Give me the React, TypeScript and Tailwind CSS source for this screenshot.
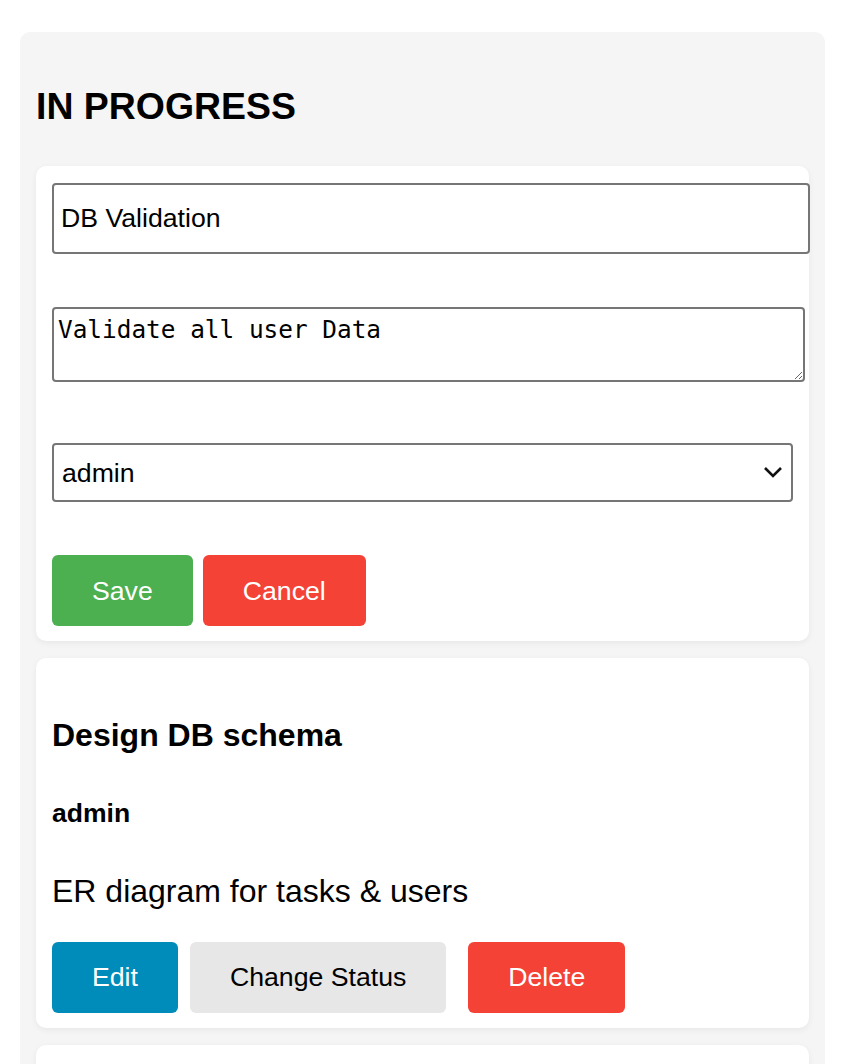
import { useState } from 'react';

const sans = '[font-family:"Liberation_Sans",Arial,sans-serif]';

export default function App() {
    const [title, setTitle] = useState('DB Validation');
    const [desc, setDesc] = useState('Validate all user Data');
    const [assignee, setAssignee] = useState('admin');

    return (
        <div className={`min-h-screen bg-white pt-[32px] text-black ${sans}`}>
            <div className="ml-[20px] w-[805px] rounded-t-[10px] bg-[#f5f5f5] px-[16px] pt-[16px] pb-[40px]">
                <h3 className="mt-[37px] mb-[38px] text-[37.44px] font-bold leading-[43px]">IN PROGRESS</h3>

                {/* task being edited */}
                <div className="mb-[17px] rounded-[10px] bg-white px-[16px] pt-[17px] pb-[15px] shadow-[0_2px_6px_rgba(0,0,0,0.06)]">
                    <input
                        type="text"
                        value={title}
                        onChange={(e) => setTitle(e.target.value)}
                        className={`block h-[71px] w-[758px] rounded-[4px] border-2 border-[#767676] bg-white px-[7px] text-[26.67px] text-black outline-none ${sans}`}
                    />
                    <textarea
                        value={desc}
                        onChange={(e) => setDesc(e.target.value)}
                        className='mt-[53px] block h-[75px] w-[753px] rounded-[4px] border-2 border-[#767676] bg-white px-[4px] pt-[6px] text-[24.4px] leading-[30px] text-black outline-none [font-family:"DejaVu_Sans_Mono",monospace]'
                    />
                    <div className="relative mt-[61px] w-[741px]">
                        <select
                            value={assignee}
                            onChange={(e) => setAssignee(e.target.value)}
                            className={`block h-[59px] w-[741px] appearance-none rounded-[4px] border-2 border-[#767676] bg-white pl-[8px] text-[26.67px] text-black outline-none ${sans}`}
                        >
                            <option value="admin">admin</option>
                            <option value="user">user</option>
                        </select>
                        <svg className="pointer-events-none absolute right-[10px] top-[23px] h-[12px] w-[20px]" viewBox="0 0 20 12" fill="none">
                            <path d="M2 2l8 8 8-8" stroke="#111" strokeWidth="2.6" />
                        </svg>
                    </div>
                    <div className="mt-[53px] flex">
                        <button className="h-[71px] rounded-[6px] bg-[#4caf50] px-[40px] text-[26.67px] text-white">Save</button>
                        <button className="ml-[10px] h-[71px] rounded-[6px] bg-[#f44336] px-[40px] text-[26.67px] text-white">Cancel</button>
                    </div>
                </div>

                {/* task card */}
                <div className="mb-[17px] rounded-[10px] bg-white px-[16px] pt-[16px] pb-[15px] shadow-[0_2px_6px_rgba(0,0,0,0.06)]">
                    <h4 className="mt-[43px] text-[32px] font-bold leading-[37px]">Design DB schema</h4>
                    <h5 className="mt-[44px] text-[26.56px] font-bold leading-[30.5px]">admin</h5>
                    <p className="mt-[44px] text-[32px] leading-[37px]">ER diagram for tasks &amp; users</p>
                    <div className="mt-[32px] flex">
                        <button className="h-[71px] rounded-[6px] bg-[#008cba] px-[40px] text-[26.67px] text-white">Edit</button>
                        <button className="ml-[12px] h-[71px] rounded-[6px] bg-[#e7e7e7] px-[40px] text-[26.67px] text-black">Change Status</button>
                        <button className="ml-[22px] h-[71px] rounded-[6px] bg-[#f44336] px-[40px] text-[26.67px] text-white">Delete</button>
                    </div>
                </div>

                {/* next card, only its top edge is in view */}
                <div className="h-[200px] rounded-[10px] bg-white shadow-[0_2px_6px_rgba(0,0,0,0.06)]" />
            </div>
        </div>
    );
}
